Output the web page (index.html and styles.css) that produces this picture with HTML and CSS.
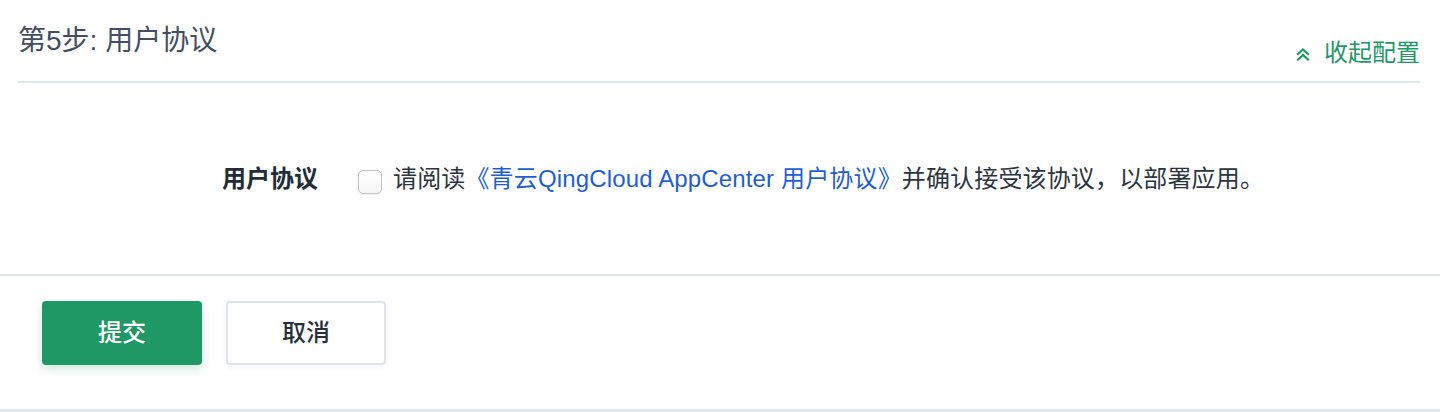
FILE: index.html
```html
<!DOCTYPE html>
<html lang="zh-CN">
<head>
<meta charset="utf-8">
<title>第5步: 用户协议</title>
<link rel="stylesheet" href="styles.css">
</head>
<body>
<div class="step">
  <div class="step-header">
    <h2 class="step-title">第5步: 用户协议</h2>
    <a class="collapse" href="#">
      <svg class="collapse-icon" width="14" height="14" viewBox="0 0 14 14" aria-hidden="true">
        <path d="M2 7 L7 2.5 L12 7 M2 12.5 L7 8 L12 12.5" fill="none" stroke="#219967" stroke-width="2.2" stroke-linecap="square" stroke-linejoin="miter"/>
      </svg>
      <span>收起配置</span>
    </a>
  </div>
  <div class="step-body">
    <div class="form-row">
      <div class="form-label">用户协议</div>
      <div class="form-control">
        <input type="checkbox" class="checkbox">
        <span class="agree-text">请阅读<a class="link" href="#">《青云QingCloud AppCenter 用户协议》</a>并确认接受该协议，以部署应用。</span>
      </div>
    </div>
  </div>
  <div class="step-footer">
    <button class="btn btn-primary" type="button">提交</button>
    <button class="btn btn-default" type="button">取消</button>
  </div>
</div>
</body>
</html>
```

FILE: styles.css
```css
* {
  box-sizing: border-box;
}

html, body {
  margin: 0;
  padding: 0;
  background: #ffffff;
}

body {
  font-family: "Liberation Sans", "Noto Sans CJK SC", sans-serif;
  color: #303a48;
  width: 1440px;
  height: 412px;
  overflow: hidden;
}

.step-header {
  display: flex;
  justify-content: space-between;
  align-items: flex-start;
  height: 83px;
  margin: 0 20px 0 18px;
  border-bottom: 2px solid #dee6ef;
}

.step-title {
  margin: 0;
  padding-top: 23px;
  font-size: 28px;
  line-height: 36px;
  font-weight: 400;
  color: #434f61;
  letter-spacing: 0;
}

.collapse {
  align-self: flex-end;
  margin-bottom: 12px;
  display: flex;
  align-items: center;
  gap: 14px;
  font-size: 24px;
  line-height: 32px;
  color: #219967;
  text-decoration: none;
}

.collapse-icon {
  display: block;
  margin-top: 1px;
}

.step-body {
  padding: 80px 0 79px;
  border-bottom: 2px solid #e1e7ee;
}

.form-row {
  display: flex;
  align-items: flex-start;
}

.form-label {
  width: 318px;
  text-align: right;
  font-size: 24px;
  line-height: 32px;
  font-weight: 700;
  color: #232c39;
  letter-spacing: 0;
}

.form-control {
  display: flex;
  align-items: flex-start;
  margin-left: 40px;
}

.checkbox {
  appearance: none;
  -webkit-appearance: none;
  width: 24px;
  height: 24px;
  margin: 7px 11px 0 0;
  border: 1px solid #c4c4c4;
  border-radius: 5px;
  background: linear-gradient(#ffffff, #f6f6f6);
  box-shadow: 0 1px 1px rgba(0, 0, 0, 0.06);
}

.agree-text {
  font-size: 24px;
  line-height: 32px;
  color: #2b3442;
  white-space: nowrap;
  letter-spacing: 0.15px;
}

.link {
  color: #1f5fd3;
  text-decoration: none;
}

.step-footer {
  display: flex;
  gap: 24px;
  padding: 25px 0 44px 42px;
  border-bottom: 3px solid #e0e6ed;
}

.btn {
  width: 160px;
  height: 64px;
  border-radius: 4px;
  font-family: inherit;
  font-size: 24px;
  line-height: 32px;
  font-weight: 500;
  cursor: pointer;
}

.btn-primary {
  background: #1f9963;
  border: none;
  color: #ffffff;
  box-shadow: 0 4px 10px rgba(31, 153, 99, 0.22);
}

.btn-default {
  background: #ffffff;
  border: 2px solid #dde4ec;
  color: #26303d;
  box-shadow: 0 2px 6px rgba(60, 80, 110, 0.06);
}
```
